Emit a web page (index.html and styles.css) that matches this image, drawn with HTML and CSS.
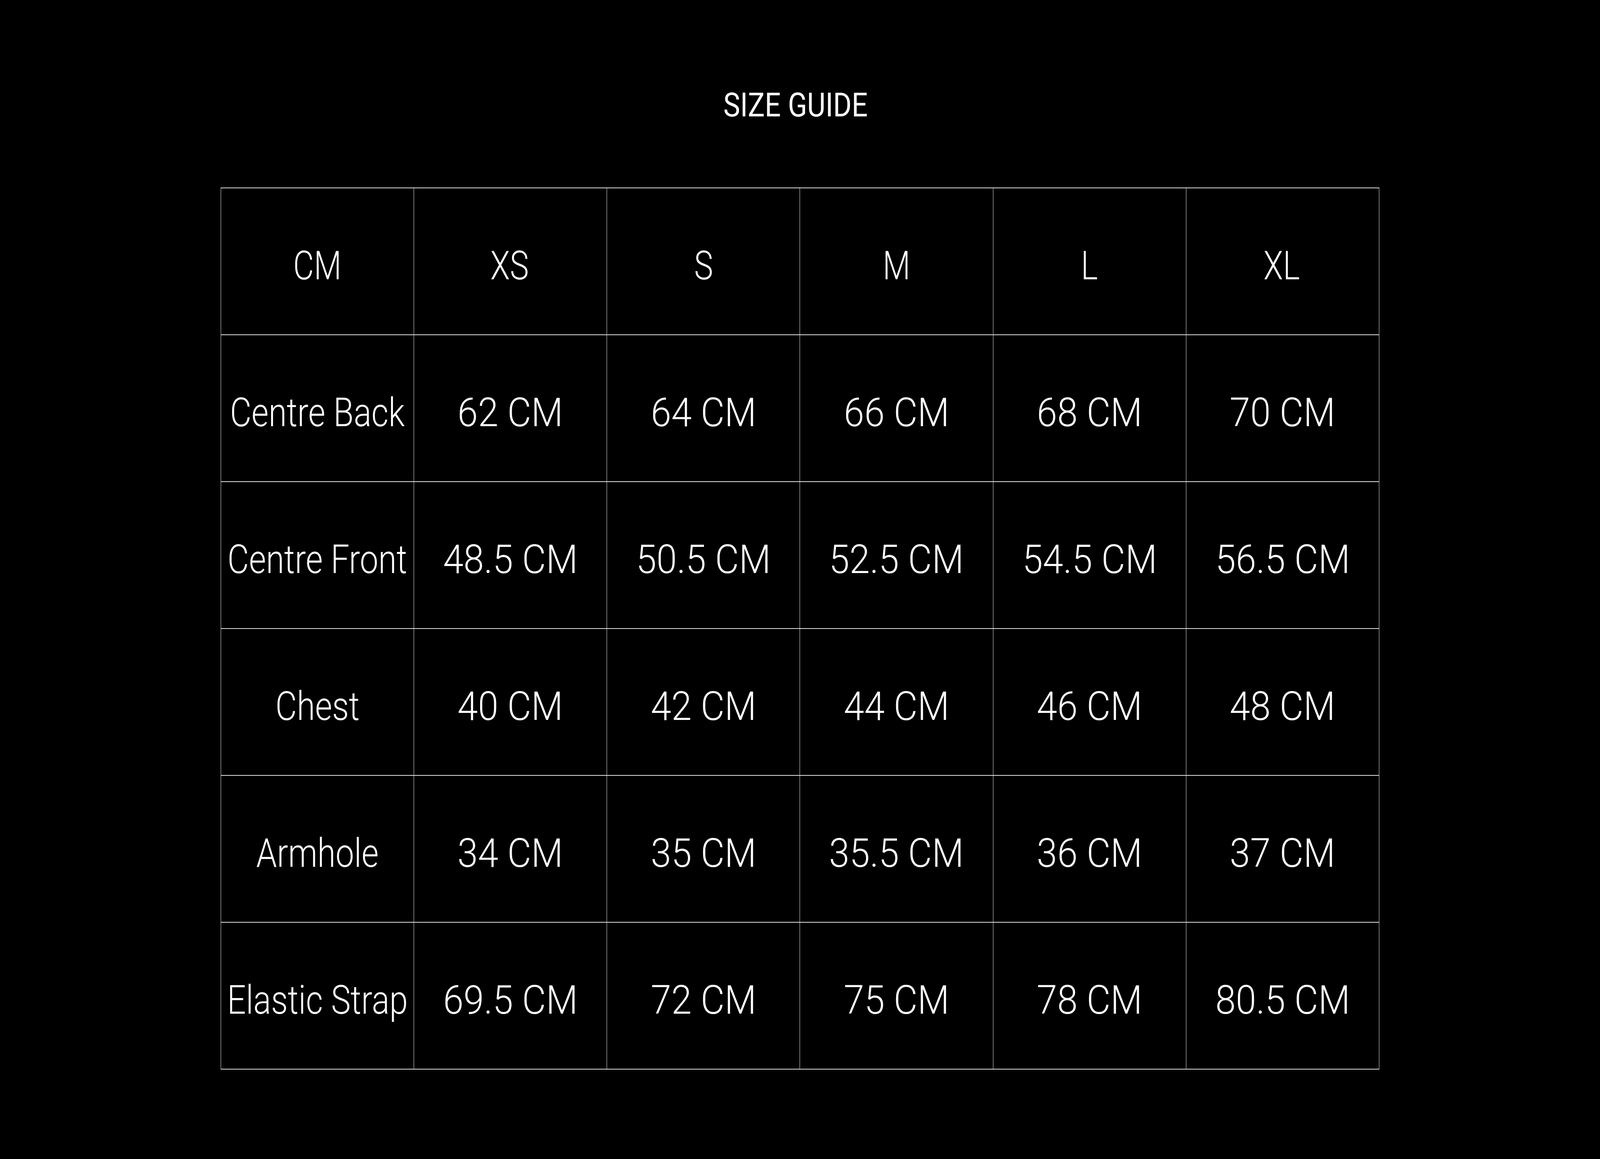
FILE: index.html
```html
<!DOCTYPE html>
<html lang="en">
<head>
<meta charset="utf-8">
<title>Size Guide</title>
<link rel="stylesheet" href="styles.css">
<script src="script.js"></script>
</head>
<body>
<main class="page">
  <h1 class="title"><span class="wide">SIZE GUIDE</span></h1>
  <div class="grid" role="table">
    <div class="cell hd"><span class="wide">CM</span></div>
    <div class="cell hd"><span class="wide">XS</span></div>
    <div class="cell hd"><span class="wide">S</span></div>
    <div class="cell hd"><span class="wide">M</span></div>
    <div class="cell hd"><span class="wide">L</span></div>
    <div class="cell hd"><span class="wide">XL</span></div>

    <div class="cell lbl"><span class="wide">Centre Back</span></div>
    <div class="cell val"><span class="wide">62 CM</span></div>
    <div class="cell val"><span class="wide">64 CM</span></div>
    <div class="cell val"><span class="wide">66 CM</span></div>
    <div class="cell val"><span class="wide">68 CM</span></div>
    <div class="cell val"><span class="wide">70 CM</span></div>

    <div class="cell lbl"><span class="wide">Centre Front</span></div>
    <div class="cell val"><span class="wide">48.5 CM</span></div>
    <div class="cell val"><span class="wide">50.5 CM</span></div>
    <div class="cell val"><span class="wide">52.5 CM</span></div>
    <div class="cell val"><span class="wide">54.5 CM</span></div>
    <div class="cell val"><span class="wide">56.5 CM</span></div>

    <div class="cell lbl"><span class="wide">Chest</span></div>
    <div class="cell val"><span class="wide">40 CM</span></div>
    <div class="cell val"><span class="wide">42 CM</span></div>
    <div class="cell val"><span class="wide">44 CM</span></div>
    <div class="cell val"><span class="wide">46 CM</span></div>
    <div class="cell val"><span class="wide">48 CM</span></div>

    <div class="cell lbl"><span class="wide">Armhole</span></div>
    <div class="cell val"><span class="wide">34 CM</span></div>
    <div class="cell val"><span class="wide">35 CM</span></div>
    <div class="cell val"><span class="wide">35.5 CM</span></div>
    <div class="cell val"><span class="wide">36 CM</span></div>
    <div class="cell val"><span class="wide">37 CM</span></div>

    <div class="cell lbl"><span class="wide">Elastic Strap</span></div>
    <div class="cell val"><span class="wide">69.5 CM</span></div>
    <div class="cell val"><span class="wide">72 CM</span></div>
    <div class="cell val"><span class="wide">75 CM</span></div>
    <div class="cell val"><span class="wide">78 CM</span></div>
    <div class="cell val"><span class="wide">80.5 CM</span></div>
  </div>
</main>
</body>
</html>
```
FILE: script.js
```js
(function () {
  function setScale() {
    var w = window.innerWidth || document.documentElement.clientWidth || 6959;
    document.documentElement.style.setProperty('--sx', String(w / 6959));
  }
  setScale();
  window.addEventListener('resize', setScale);
})();
```
FILE: styles.css
```css
:root {
  --sx: 1;
}

html, body {
  margin: 0;
  padding: 0;
  background: #000;
}

body {
  color: #fff;
  font-family: Roboto, "Liberation Sans", Arial, sans-serif;
  overflow: hidden;
}

.page {
  display: flex;
  flex-direction: column;
  align-items: center;
  padding-top: 226px;
}

.title {
  margin: 0;
  padding-right: 0.575vw;
  font-size: 86px;
  font-weight: 400;
  line-height: 1;
  white-space: nowrap;
}

.wide {
  display: inline-block;
  transform-origin: center;
}

.title .wide {
  transform: scaleX(calc(1.43 * var(--sx)));
}

.grid {
  margin-top: 168px;
  box-sizing: border-box;
  width: 72.424vw;
  display: grid;
  grid-template-columns: repeat(6, minmax(0, 1fr));
  grid-auto-rows: 374px;
  row-gap: 2px;
  column-gap: 1px;
  background: #e0e0e0;
  border-style: solid;
  border-color: #e0e0e0;
  border-width: 2px 1px;
}

.cell {
  background: #000;
  display: flex;
  align-items: center;
  justify-content: center;
  box-sizing: border-box;
  padding-top: 22px;
  font-size: 102px;
  font-weight: 300;
  line-height: 1;
  white-space: nowrap;
}

.hd .wide { transform: scaleX(calc(1.36 * var(--sx))); }
.hd:nth-child(2) .wide,
.hd:nth-child(6) .wide { margin-right: 0.1vw; }
.lbl .wide { transform: scaleX(calc(1.41 * var(--sx))); }
.val .wide { transform: scaleX(calc(1.57 * var(--sx))); }
```
